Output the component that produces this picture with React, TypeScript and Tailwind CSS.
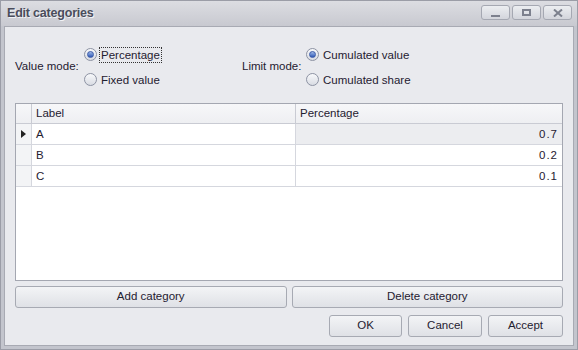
const font = { fontFamily: '"Liberation Sans", Arial, sans-serif' };

function Radio({ checked, label, focused }: { checked?: boolean; label: string; focused?: boolean }) {
  return (
    <div className="flex items-center h-[25px]">
      <span className="w-[13px] h-[13px] rounded-full border border-[#8d93a3] bg-gradient-to-b from-[#f8f9fb] to-[#d9dce3] flex items-center justify-center">
        {checked && (
          <span className="w-[7px] h-[7px] rounded-full bg-gradient-to-b from-[#9fb8e6] to-[#2f57b5] border border-[#3a5aa8]" />
        )}
      </span>
      <span
        className={
          focused
            ? 'ml-[2px] px-[1px] border border-dotted border-[#333] leading-[14px]'
            : 'ml-[3px] leading-[14px] border border-transparent'
        }
      >
        {label}
      </span>
    </div>
  );
}

function Btn({ label, className }: { label: string; className?: string }) {
  return (
    <button
      className={
        'h-[22px] rounded-[3px] border border-[#a7aab3] bg-gradient-to-b from-[#f3f4f6] to-[#dfe1e6] text-[11.5px] text-[#1f2030] ' +
        (className ?? '')
      }
      style={font}
    >
      {label}
    </button>
  );
}

function TitleButton({ children }: { children: React.ReactNode }) {
  return (
    <div className="w-[29px] h-[15px] rounded-[3px] border border-[#a5a8b2] bg-gradient-to-b from-[#eceef1] to-[#d3d5dc] flex items-center justify-center">
      {children}
    </div>
  );
}

const rows = [
  { label: 'A', value: '0.7' },
  { label: 'B', value: '0.2' },
  { label: 'C', value: '0.1' },
];

export default function App() {
  return (
    <div
      className="w-[578px] h-[350px] flex flex-col bg-[#c3c5cd] border border-[#9b9da7] text-[11.5px] text-[#1f2030]"
      style={font}
    >
      {/* title bar */}
      <div className="h-[25px] flex items-center pl-[6px] pr-[5px] bg-gradient-to-b from-[#dcdde2] to-[#c8c9d0]">
        <span
          className="font-bold text-[12.5px] text-[#4a4d5c] tracking-[-0.2px]"
          style={{ textShadow: '1px 1px 0 #f2f3f6' }}
        >
          Edit categories
        </span>
        <div className="ml-auto flex gap-[2px] mt-[-2px]">
          <TitleButton>
            <span className="w-[9px] h-[2px] bg-[#7c808d] mt-[6px]" />
          </TitleButton>
          <TitleButton>
            <span className="w-[9px] h-[7px] border-2 border-[#7c808d]" />
          </TitleButton>
          <TitleButton>
            <svg width="10" height="8" viewBox="0 0 10 8">
              <path d="M1 0.5 L9 7.5 M9 0.5 L1 7.5" stroke="#7c808d" strokeWidth="2" />
            </svg>
          </TitleButton>
        </div>
      </div>

      {/* client area */}
      <div className="flex-1 mx-[3px] mb-[3px] border border-[#a8aab3] bg-[#e9eaee] flex flex-col pl-[10px] pr-[10px] pt-[15px]">
        <div className="flex items-center h-[50px]">
          <span className="w-[69px]">Value mode:</span>
          <div className="flex flex-col w-[158px]">
            <Radio checked focused label="Percentage" />
            <Radio label="Fixed value" />
          </div>
          <span className="w-[64px]">Limit mode:</span>
          <div className="flex flex-col">
            <Radio checked label="Cumulated value" />
            <Radio label="Cumulated share" />
          </div>
        </div>

        {/* grid */}
        <div className="mt-[11px] h-[178px] border border-[#a4a7b1] bg-white flex flex-col">
          <div className="flex h-[20px] border-b border-[#c9cbd3] bg-gradient-to-b from-[#f7f7f9] to-[#eeeff2]">
            <div className="w-[16px] border-r border-[#c9cbd3]" />
            <div className="w-[264px] border-r border-[#c9cbd3] pl-[4px] leading-[19px]">Label</div>
            <div className="flex-1 pl-[4px] leading-[19px]">Percentage</div>
          </div>
          {rows.map((r, i) => (
            <div key={r.label} className="flex h-[21px] border-b border-[#d5d7de]">
              <div className="w-[16px] border-r border-[#d5d7de] bg-[#f3f4f6] flex items-center justify-center">
                {i === 0 && (
                  <svg width="5" height="8" viewBox="0 0 5 8">
                    <path d="M0 0 L5 4 L0 8 Z" fill="#222" />
                  </svg>
                )}
              </div>
              <div className="w-[264px] border-r border-[#d5d7de] pl-[4px] leading-[20px]">{r.label}</div>
              <div
                className={
                  'flex-1 pr-[4px] text-right leading-[20px] tracking-[1px] ' + (i === 0 ? 'bg-[#ecedf0]' : '')
                }
              >
                {r.value}
              </div>
            </div>
          ))}
        </div>

        <div className="mt-[5px] flex gap-[5px]">
          <Btn label="Add category" className="flex-1" />
          <Btn label="Delete category" className="flex-1" />
        </div>

        <div className="mt-[7px] flex justify-end gap-[6px]">
          <Btn label="OK" className="w-[73px] from-[#eef2fb] to-[#d4dcef] border-[#9ca7c2]" />
          <Btn label="Cancel" className="w-[74px]" />
          <Btn label="Accept" className="w-[75px]" />
        </div>
      </div>
    </div>
  );
}
